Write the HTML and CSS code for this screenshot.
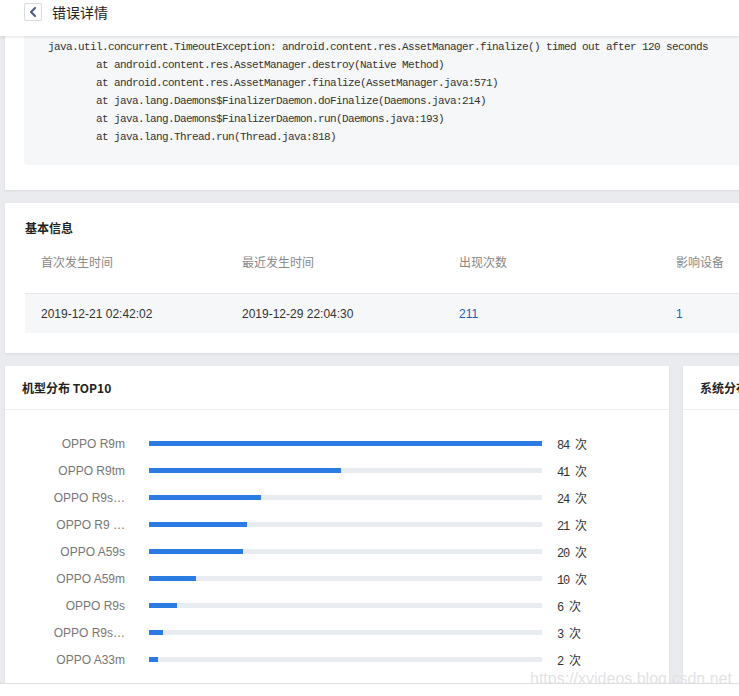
FILE: index.html
```html
<!DOCTYPE html>
<html lang="zh-CN">
<head>
<meta charset="utf-8">
<title>错误详情</title>
<link rel="stylesheet" href="styles.css">
</head>
<body>
<header class="topbar">
  <button class="back" aria-label="返回">
    <svg width="16" height="16" viewBox="0 0 16 16"><polyline points="10,4 6,8 10,12" fill="none" stroke="#4b5876" stroke-width="2" stroke-linecap="round" stroke-linejoin="round"/></svg>
  </button>
  <span class="title">错误详情</span>
</header>
<main class="page">
  <section class="card card-stack">
<pre class="code">java.util.concurrent.TimeoutException: android.content.res.AssetManager.finalize() timed out after 120 seconds
        at android.content.res.AssetManager.destroy(Native Method)
        at android.content.res.AssetManager.finalize(AssetManager.java:571)
        at java.lang.Daemons$FinalizerDaemon.doFinalize(Daemons.java:214)
        at java.lang.Daemons$FinalizerDaemon.run(Daemons.java:193)
        at java.lang.Thread.run(Thread.java:818)</pre>
  </section>
  <section class="card card-info">
    <h2 class="card-title">基本信息</h2>
    <div class="info-table">
      <div class="info-row info-head">
        <div class="cell c1">首次发生时间</div>
        <div class="cell c2">最近发生时间</div>
        <div class="cell c3">出现次数</div>
        <div class="cell c4">影响设备</div>
      </div>
      <div class="info-row info-body">
        <div class="cell c1">2019-12-21 02:42:02</div>
        <div class="cell c2">2019-12-29 22:04:30</div>
        <div class="cell c3 num">211</div>
        <div class="cell c4 num">1</div>
      </div>
    </div>
  </section>
  <div class="split">
    <section class="card card-chart">
      <div class="chart-head">机型分布 TOP10</div>
      <div class="bars">
        <div class="bar-row"><span class="label">OPPO R9m</span><span class="track"><span class="fill" style="width:100%"></span></span><span class="val">84 次</span></div>
        <div class="bar-row"><span class="label">OPPO R9tm</span><span class="track"><span class="fill" style="width:48.8%"></span></span><span class="val">41 次</span></div>
        <div class="bar-row"><span class="label">OPPO R9s…</span><span class="track"><span class="fill" style="width:28.6%"></span></span><span class="val">24 次</span></div>
        <div class="bar-row"><span class="label">OPPO R9 …</span><span class="track"><span class="fill" style="width:25%"></span></span><span class="val">21 次</span></div>
        <div class="bar-row"><span class="label">OPPO A59s</span><span class="track"><span class="fill" style="width:23.8%"></span></span><span class="val">20 次</span></div>
        <div class="bar-row"><span class="label">OPPO A59m</span><span class="track"><span class="fill" style="width:11.9%"></span></span><span class="val">10 次</span></div>
        <div class="bar-row"><span class="label">OPPO R9s</span><span class="track"><span class="fill" style="width:7.1%"></span></span><span class="val">6 次</span></div>
        <div class="bar-row"><span class="label">OPPO R9s…</span><span class="track"><span class="fill" style="width:3.6%"></span></span><span class="val">3 次</span></div>
        <div class="bar-row"><span class="label">OPPO A33m</span><span class="track"><span class="fill" style="width:2.4%"></span></span><span class="val">2 次</span></div>
      </div>
    </section>
    <section class="card card-side">
      <div class="chart-head side-head">系统分布</div>
    </section>
  </div>
  <div class="watermark">https://xvideos.blog.csdn.net</div>
</main>
</body>
</html>
```

FILE: styles.css
```css
html, body {
  margin: 0;
  padding: 0;
  background: #ffffff;
  overflow: hidden;
  width: 739px;
  height: 696px;
  font-family: "Liberation Sans", "Noto Sans CJK SC", sans-serif;
  color: #333;
}

.topbar {
  position: relative;
  z-index: 2;
  height: 36px;
  background: #fff;
  display: flex;
  align-items: flex-start;
  padding: 3px 0 0 24px;
  box-shadow: 0 1px 3px rgba(0, 0, 0, 0.12);
  box-sizing: border-box;
}

.back {
  width: 18px;
  height: 18px;
  padding: 0;
  margin: 0;
  border: 1px solid #d9dce2;
  border-radius: 2px;
  background: #fff;
  display: flex;
  align-items: center;
  justify-content: center;
  box-sizing: border-box;
}

.title {
  margin-left: 10px;
  font-size: 14px;
  line-height: 18px;
  color: #222;
  font-family: "Noto Sans CJK SC", sans-serif;
}

.page {
  position: relative;
  background: #eaebef;
  height: 647px;
  border-bottom: 1px solid #dcdde1;
  padding-left: 5px;
  overflow: hidden;
}

.card {
  background: #fff;
  box-shadow: 0 1px 2px rgba(0, 0, 0, 0.08);
  width: 900px;
  box-sizing: border-box;
}

.card-stack {
  padding: 0 0 25px 19px;
  margin-bottom: 13px;
}

.code {
  margin: 0;
  background: #f6f7f9;
  border-radius: 0 0 0 4px;
  padding: 2px 0 19px 24px;
  font-family: "Liberation Mono", monospace;
  font-size: 11px;
  letter-spacing: -0.6px;
  line-height: 18px;
  color: #333;
  white-space: pre;
}

.card-info {
  padding: 15px 0 20px 20px;
  margin-bottom: 13px;
}

.card-title {
  margin: 0;
  font-size: 12px;
  line-height: 20px;
  font-weight: bold;
  color: #222;
  font-family: "Noto Sans CJK SC", sans-serif;
}

.info-row {
  display: flex;
}

.info-head {
  padding: 14px 0 21px;
  color: #888;
  font-family: "Noto Sans CJK SC", sans-serif;
}

.info-body {
  background: #f6f7f9;
  border-top: 1px solid #e6e8eb;
  height: 40px;
  align-items: center;
  box-sizing: border-box;
}

.cell {
  font-size: 12px;
  line-height: 20px;
  padding-left: 16px;
  box-sizing: border-box;
}

.c1 { width: 201px; }
.c2 { width: 217px; }
.c3 { width: 217px; }
.c4 { width: 217px; }

.num {
  color: #1f5db3;
}

.split {
  display: flex;
  gap: 14px;
  align-items: stretch;
  height: 317px;
}

.card-chart {
  width: 664px;
  flex: none;
}

.card-side {
  width: 300px;
  flex: none;
}

.chart-head {
  height: 44px;
  box-sizing: border-box;
  border-bottom: 1px solid #eceef1;
  padding-left: 17px;
  display: flex;
  align-items: center;
  font-size: 12px;
  font-weight: bold;
  color: #222;
  font-family: "Noto Sans CJK SC", sans-serif;
}

.bars {
  padding-top: 20px;
}

.bar-row {
  display: flex;
  align-items: center;
  height: 27px;
}

.label {
  width: 120px;
  text-align: right;
  font-size: 12px;
  color: #777;
  white-space: nowrap;
}

.track {
  margin-left: 24px;
  width: 393px;
  height: 5px;
  background: #e8ebf0;
  display: flex;
}

.fill {
  height: 5px;
  background: #2b7be3;
}

.val {
  margin-left: 15px;
  font-family: "Liberation Mono", "Noto Sans CJK SC", monospace;
  font-size: 12px;
  letter-spacing: -1.2px;
  color: #333;
  white-space: pre;
}

.watermark {
  position: absolute;
  left: 530px;
  top: 634px;
  font-size: 16px;
  line-height: 18px;
  color: rgba(200, 200, 205, 0.55);
  text-shadow: 0 0 1px rgba(255, 255, 255, 0.8);
  font-family: "Liberation Sans", sans-serif;
  pointer-events: none;
  white-space: nowrap;
}
```
